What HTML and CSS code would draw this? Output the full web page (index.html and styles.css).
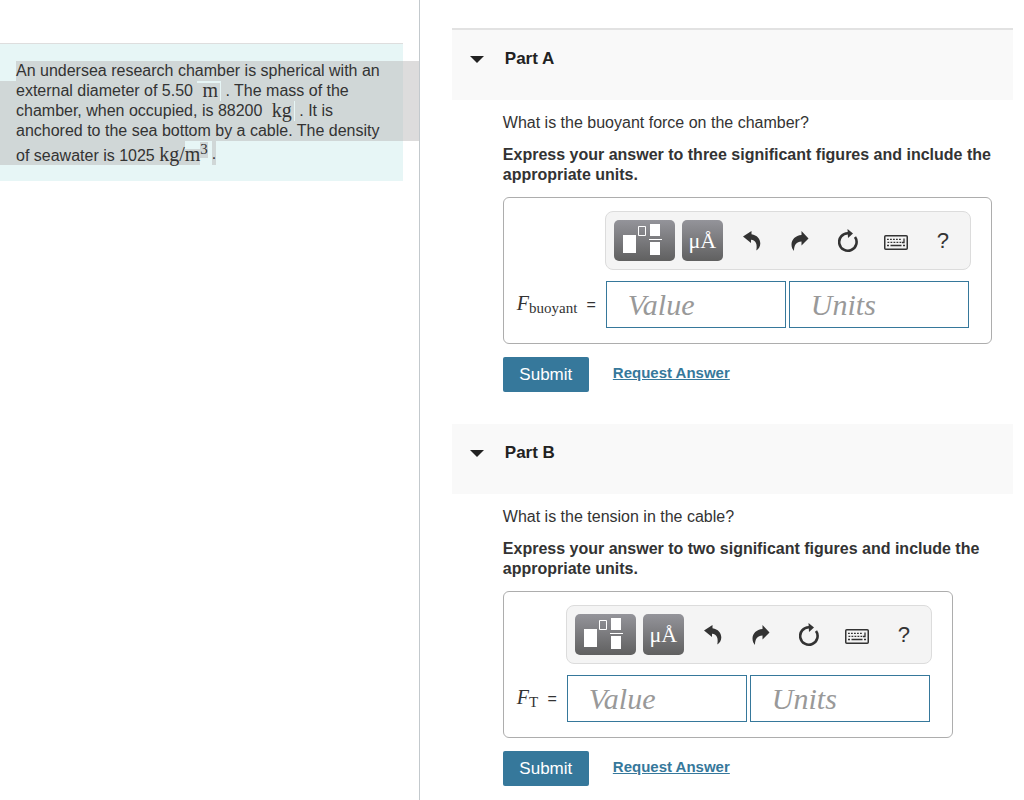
FILE: index.html
```html
<!DOCTYPE html>
<html lang="en">
<head>
    <meta charset="UTF-8">
    <meta name="viewport" content="width=device-width, initial-scale=1.0">
    <title>Undersea Research Chamber</title>
    <link rel="stylesheet" href="styles.css">
</head>
<body>
    <!-- Shared icons -->
    <svg class="sprite" width="0" height="0" aria-hidden="true">
        <symbol id="icon-template" viewBox="0 0 61 41">
            <path fill="#fff" d="M9 15h13v18H9z M36 4h10v12H36z M36 22h10v13H36z M35 19h13v1H35z" />
            <path fill="none" stroke="#fff" d="M24.500 6.500h7v9h-7z" />
        </symbol>
        <symbol id="icon-undo" viewBox="0 0 18 20">
            <path d="M0 5.500 8.500 0v3.200C14 4 17.300 8 17.300 12.500c0 3.500-1.800 5.500-4 7C14.500 13.500 13 9.200 8 8.800V12z" />
        </symbol>
        <symbol id="icon-redo" viewBox="0 0 18 20">
            <path d="M17.500 7.500 10.500 0v4C4.500 4.500.5 8.500.5 13.500c0 3 1 4.500 2.500 6.500 0-6 2.500-9.500 7.500-9.500V14.500z" />
        </symbol>
        <symbol id="icon-reset" viewBox="0 0 20 24">
            <path fill="none" stroke="#333" stroke-width="2.600" d="M10 4.300A8.700 8.700 0 1 0 17 8" />
            <path d="M9.500 0 15 4.500 10 9z" />
        </symbol>
        <symbol id="icon-keyboard" viewBox="0 0 24 15">
            <rect x=".75" y=".75" width="22.500" height="13.500" rx="1" fill="none" stroke="#333" stroke-width="1.500" />
            <path fill="none" stroke="#333" stroke-width="1.300" d="M3 4.300h14" stroke-dasharray="1.800 1.200" />
            <path fill="none" stroke="#333" stroke-width="1.300" d="M3.500 7.300h14" stroke-dasharray="1.800 1.200" />
            <path fill="none" stroke="#333" stroke-width="1.300" d="M3 10.500h2M6.500 10.500h11M19 10.500h2M20 3.500v4h-2" />
        </symbol>
    </svg>

    <div class="page">
        <aside class="problem-pane">
            <div class="problem">
                <p class="problem-text">
                    <span class="line line-first">An undersea research chamber is spherical with an</span>
                    <span class="line">external diameter of 5.50 <span class="unit unit-top">m</span> . The mass of the</span>
                    <span class="line">chamber, when occupied, is 88200 <span class="unit">kg</span> . It is</span>
                    <span class="line">anchored to the sea bottom by a cable. The density</span>
                    <span class="line-last"><span class="mark mark-start">of seawater is 1025 <span class="math">kg/</span></span><span class="mark-m math">m</span><span class="mark-sup math">3</span><span class="mark mark-dot">.</span></span>
                </p>
            </div>
        </aside>

        <main class="parts">
            <section class="part">
                <header class="part-header part-header-first">
                    <span class="caret"></span>
                    <h2 class="part-title">Part A</h2>
                </header>
                <div class="part-body">
                    <p class="question">What is the buoyant force on the chamber?</p>
                    <p class="instructions">Express your answer to three significant figures and include the appropriate units.</p>
                    <div class="answer-box">
                        <div class="toolbar">
                            <button class="tool-dark tool-template" type="button" aria-label="Templates"><svg width="61" height="41"><use href="#icon-template" /></svg></button>
                            <button class="tool-dark tool-symbols" type="button" aria-label="Symbols">μÅ</button>
                            <button class="tool" type="button" aria-label="Undo"><svg width="18" height="20"><use href="#icon-undo" /></svg></button>
                            <button class="tool" type="button" aria-label="Redo"><svg width="18" height="20"><use href="#icon-redo" /></svg></button>
                            <button class="tool" type="button" aria-label="Reset"><svg width="20" height="24"><use href="#icon-reset" /></svg></button>
                            <button class="tool tool-keyboard" type="button" aria-label="Keyboard shortcuts"><svg width="24" height="15"><use href="#icon-keyboard" /></svg></button>
                            <button class="tool tool-help" type="button" aria-label="Help">?</button>
                        </div>
                        <label class="variable variable-wide" for="value-a"><span><i>F</i><sub>buoyant</sub></span><span class="equals">=</span></label>
                        <div class="fields">
                            <input class="field" id="value-a" type="text" placeholder="Value">
                            <input class="field" type="text" placeholder="Units" aria-label="Units">
                        </div>
                    </div>
                    <div class="actions">
                        <button class="submit" type="submit">Submit</button>
                        <a class="request" href="#">Request Answer</a>
                    </div>
                </div>
            </section>

            <section class="part">
                <header class="part-header">
                    <span class="caret"></span>
                    <h2 class="part-title">Part B</h2>
                </header>
                <div class="part-body">
                    <p class="question">What is the tension in the cable?</p>
                    <p class="instructions">Express your answer to two significant figures and include the appropriate units.</p>
                    <div class="answer-box">
                        <div class="toolbar">
                            <button class="tool-dark tool-template" type="button" aria-label="Templates"><svg width="61" height="41"><use href="#icon-template" /></svg></button>
                            <button class="tool-dark tool-symbols" type="button" aria-label="Symbols">μÅ</button>
                            <button class="tool" type="button" aria-label="Undo"><svg width="18" height="20"><use href="#icon-undo" /></svg></button>
                            <button class="tool" type="button" aria-label="Redo"><svg width="18" height="20"><use href="#icon-redo" /></svg></button>
                            <button class="tool" type="button" aria-label="Reset"><svg width="20" height="24"><use href="#icon-reset" /></svg></button>
                            <button class="tool tool-keyboard" type="button" aria-label="Keyboard shortcuts"><svg width="24" height="15"><use href="#icon-keyboard" /></svg></button>
                            <button class="tool tool-help" type="button" aria-label="Help">?</button>
                        </div>
                        <label class="variable" for="value-b"><span><i>F</i><sub>T</sub></span><span class="equals">=</span></label>
                        <div class="fields">
                            <input class="field" id="value-b" type="text" placeholder="Value">
                            <input class="field" type="text" placeholder="Units" aria-label="Units">
                        </div>
                    </div>
                    <div class="actions">
                        <button class="submit" type="submit">Submit</button>
                        <a class="request" href="#">Request Answer</a>
                    </div>
                </div>
            </section>
        </main>
    </div>
</body>
</html>
```

FILE: styles.css
```css
* {
    box-sizing: border-box;
}

body {
    margin: 0;
    font-family: "Liberation Sans", Arial, Helvetica, sans-serif;
    font-size: 16px;
    line-height: 20px;
    color: #333;
    background: #fff;
}

h2,
p {
    margin: 0;
}

.sprite {
    position: absolute;
}

.page {
    display: grid;
    grid-template-columns: 41% 1fr;
    min-height: 100vh;
}

/* Problem statement */
.problem-pane {
    padding-top: 43px;
    border-right: 1px solid #c3c9cd;
}

.problem {
    margin-right: 16px;
    padding: 17px 0 16px 16px;
    border-top: 1px solid #dedede;
    background: #e7f6f6;
}

.problem-text {
    margin-right: -16px;
}

.line {
    display: block;
    height: 20px;
    margin-left: -16px;
    padding-left: 16px;
    white-space: nowrap;
    background: rgba(180, 177, 177, 0.45);
}

.line-first {
    margin-left: 0;
    padding-left: 0;
}

.math,
.unit {
    font-family: "Liberation Serif", "Times New Roman", serif;
    font-size: 20px;
}

.unit {
    display: inline-block;
    height: 20px;
    padding: 0 2px 0 5px;
    border-right: 1px solid #e7f6f6;
    line-height: 18px;
    vertical-align: top;
}

.unit-top {
    line-height: 14px;
    border-top: 2px solid #e7f6f6;
}

.line-last {
    display: flex;
    height: 24px;
    margin-left: -16px;
    line-height: 26px;
}

.mark {
    background: rgba(180, 177, 177, 0.45);
}

.mark-start {
    padding-left: 16px;
}

.mark-m {
    height: 16px;
    margin-top: 8px;
    line-height: 10px;
    background: rgba(180, 177, 177, 0.45);
}

.mark-sup {
    height: 16px;
    margin-top: 1px;
    font-size: 15px;
    line-height: 15px;
    background: rgba(180, 177, 177, 0.45);
}

.mark-dot {
    margin-left: 4px;
}

/* Parts */
.parts {
    padding: 28px 11px 14px 32px;
}

.part {
    margin-bottom: 32px;
}

.part:last-child {
    margin-bottom: 0;
}

.part-header {
    display: flex;
    align-items: center;
    height: 70px;
    padding: 0 18px 12px;
    background: #f9f9f9;
}

.part-header-first {
    height: 72px;
    border-top: 2px solid #e2e2e2;
}

.caret {
    border: 7px solid transparent;
    border-top-color: #222;
    border-bottom: 0;
}

.part-title {
    margin-left: 21px;
    font-size: 17px;
    line-height: 20px;
    color: #222;
}

.part-body {
    padding: 13px 0 0 51px;
}

.instructions {
    margin: 12px 0;
    font-weight: bold;
}

.answer-box {
    display: grid;
    grid-template-columns: auto 366px;
    row-gap: 11px;
    width: fit-content;
    height: 147px;
    padding: 13px 20px 15px 13px;
    border: 1px solid #adadad;
    border-radius: 6px;
}

.toolbar {
    display: flex;
    grid-column: 2;
    align-items: center;
    height: 59px;
    padding-left: 8px;
    border: 1px solid #dcdcdc;
    border-radius: 8px;
    background: #f4f4f4;
}

.tool-dark,
.tool {
    display: flex;
    flex: none;
    align-items: center;
    justify-content: center;
    height: 41px;
    padding: 0;
    border: 0;
    color: #333;
    fill: #333;
    background: none;
}

.tool-dark {
    margin-right: 7px;
    border-radius: 5px;
    color: #fff;
    background: linear-gradient(#94949a, #606060);
}

.tool-template {
    width: 61px;
}

.tool-symbols {
    width: 41px;
    margin-right: 5px;
    font-family: "Liberation Serif", "Times New Roman", serif;
    font-size: 22px;
}

.tool {
    width: 48px;
}

.tool-keyboard {
    padding-top: 4px;
}

.tool-help {
    width: 46px;
    font-family: "Liberation Sans", Arial, sans-serif;
    font-size: 22px;
}

.variable {
    display: flex;
    align-items: center;
    justify-content: space-between;
    width: 49px;
    padding-right: 9px;
    font-family: "Liberation Serif", "Times New Roman", serif;
    font-size: 20px;
}

.variable-wide {
    width: 88px;
}

.variable sub {
    font-size: 15px;
    line-height: 15px;
    vertical-align: -3px;
}

.equals {
    font-family: "Liberation Sans", Arial, sans-serif;
    font-size: 16px;
}

.fields {
    display: flex;
    gap: 3px;
    padding-left: 1px;
}

.field {
    width: 180px;
    height: 47px;
    padding: 0 21px;
    border: 1px solid #36789b;
    border-radius: 0;
    font-family: "Liberation Serif", "Times New Roman", serif;
    font-size: 30px;
    font-style: italic;
    color: #333;
    background: #fff;
}

.field::placeholder {
    color: #999;
    opacity: 1;
}

.actions {
    display: flex;
    align-items: center;
    margin-top: 13px;
}

.submit {
    width: 86px;
    height: 35px;
    padding: 0;
    border: 0;
    border-radius: 2px;
    font-family: "Liberation Sans", Arial, sans-serif;
    font-size: 17px;
    color: #fff;
    background: #36789b;
}

.request {
    margin-left: 24px;
    padding-bottom: 3px;
    font-size: 15px;
    font-weight: bold;
    color: #36789b;
}
```
